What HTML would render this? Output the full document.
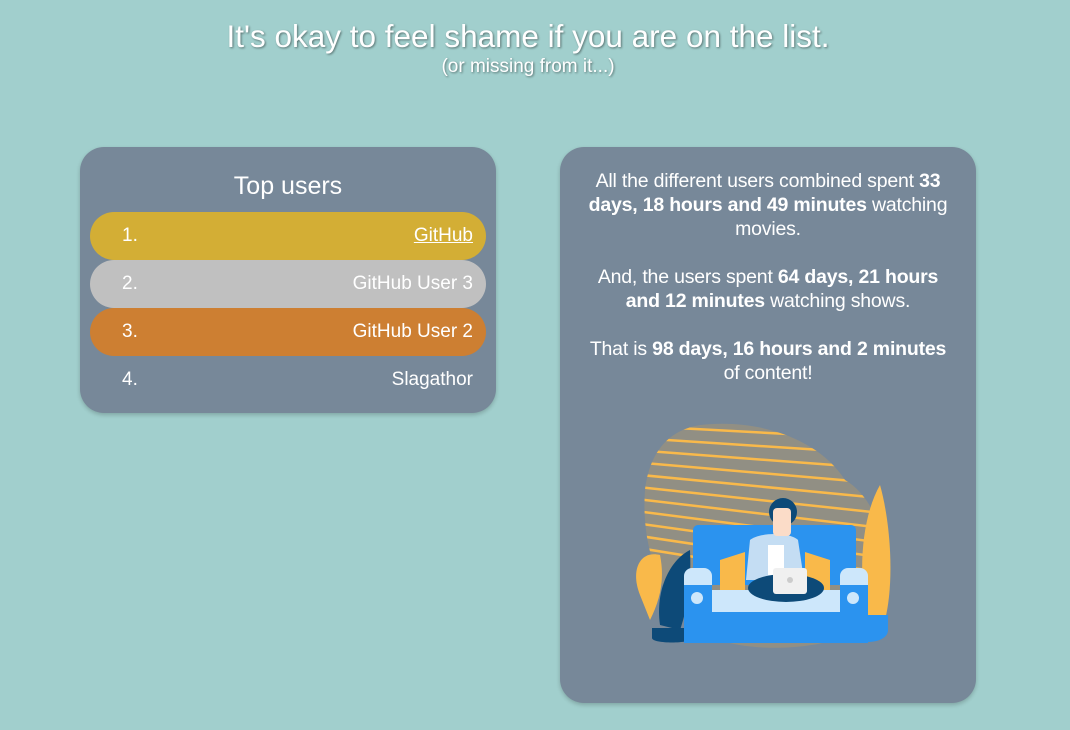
<!DOCTYPE html>
<html><head><meta charset="utf-8"><style>
body{margin:0;width:1070px;height:730px;background:#a1cfcd;font-family:"Liberation Sans",Roboto,sans-serif;color:#fff;overflow:hidden;position:relative}
.t{position:absolute;left:0;width:1056px;text-align:center;text-shadow:1px 1px 2px rgba(0,0,0,.45)}
.card{position:absolute;background:#778899;border-radius:24px;box-shadow:0 2px 4px rgba(0,0,0,.2)}
.row{position:absolute;left:10px;width:396px;height:48px;border-radius:24px;font-size:19px;line-height:48px}
.row .n{position:absolute;left:32px}.row .u{position:absolute;right:13px}
.txt{position:absolute;left:27px;width:362px;text-align:center;font-size:19.5px;line-height:24px;letter-spacing:-0.2px}
</style></head><body>
<div class="t" style="top:17px;font-size:31.5px;line-height:38px">It's okay to feel shame if you are on the list.</div>
<div class="t" style="top:56px;font-size:19px;line-height:22px">(or missing from it...)</div>
<div class="card" style="left:80px;top:147px;width:416px;height:266px">
<div style="position:absolute;top:25px;width:100%;text-align:center;font-size:25px">Top users</div>
<div class="row" style="top:65px;background:#d3ae35"><span class="n">1.</span><span class="u" style="text-decoration:underline">GitHub</span></div>
<div class="row" style="top:113px;background:#c0c0c0"><span class="n">2.</span><span class="u">GitHub User 3</span></div>
<div class="row" style="top:161px;background:#cd7f32"><span class="n">3.</span><span class="u">GitHub User 2</span></div>
<div class="row" style="top:209px"><span class="n">4.</span><span class="u">Slagathor</span></div>
</div>
<div class="card" style="left:560px;top:147px;width:416px;height:556px">
<div class="txt" style="top:22px">All the different users combined spent <b>33 days, 18 hours and 49 minutes</b> watching movies.<br><br>And, the users spent <b>64 days, 21 hours and 12 minutes</b> watching shows.<br><br>That is <b>98 days, 16 hours and 2 minutes</b><br>of content!</div>
<svg style="position:absolute;left:60px;top:263px" width="290" height="250" viewBox="620 410 290 250">
<defs><clipPath id="b"><path d="M700 425 C760 418 820 440 845 480 C880 500 895 560 880 610 C860 650 760 655 720 640 C670 620 640 560 645 490 C650 450 670 430 700 425Z"/></clipPath></defs>
<path d="M700 425 C760 418 820 440 845 480 C880 500 895 560 880 610 C860 650 760 655 720 640 C670 620 640 560 645 490 C650 450 670 430 700 425Z" fill="#918f84"/>
<g clip-path="url(#b)" stroke="#f9b94a" stroke-width="2.5">
<line x1="620" y1="425" x2="900" y2="440"/><line x1="620" y1="437" x2="900" y2="455"/><line x1="620" y1="449" x2="900" y2="470"/><line x1="620" y1="461" x2="900" y2="485"/><line x1="620" y1="473" x2="900" y2="500"/><line x1="620" y1="485" x2="900" y2="515"/><line x1="620" y1="497" x2="900" y2="530"/><line x1="620" y1="509" x2="900" y2="545"/><line x1="620" y1="521" x2="900" y2="560"/><line x1="620" y1="533" x2="900" y2="575"/><line x1="620" y1="545" x2="900" y2="590"/></g>
<path d="M868 620 C858 580 860 520 880 485 C890 520 895 580 885 620Z" fill="#f9b94a"/>
<path d="M640 595 C630 570 640 550 660 555 C665 580 660 600 650 620Z" fill="#f9b94a"/>
<path d="M660 625 C655 590 670 560 690 550 C692 590 685 615 680 630Z" fill="#0d4a78"/>
<path d="M652 628 h40 v10 c0 6 -40 6 -40 0z" fill="#0d4a78"/>
<rect x="693" y="525" width="163" height="60" rx="5" fill="#2b93ef"/>
<path d="M720 560 l25 -8 l0 40 l-25 0z M805 552 l25 8 l0 30 l-25 0z" fill="#f9b94a"/>
<rect x="700" y="590" width="160" height="22" fill="#cde7fb"/>
<rect x="684" y="568" width="28" height="75" rx="8" fill="#cde7fb"/>
<rect x="840" y="568" width="28" height="75" rx="8" fill="#cde7fb"/>
<rect x="684" y="585" width="28" height="58" fill="#2b93ef"/>
<rect x="840" y="585" width="28" height="58" fill="#2b93ef"/>
<rect x="710" y="612" width="130" height="31" fill="#2b93ef"/>
<path d="M868 615 h20 v15 c0 8 -10 12 -20 12z" fill="#2b93ef"/>
<circle cx="697" cy="598" r="6" fill="#cde7fb"/><circle cx="853" cy="598" r="6" fill="#cde7fb"/>
<path d="M750 540 c10 -8 40 -8 48 0 l6 40 h-58z" fill="#c4ddf3"/>
<rect x="768" y="545" width="16" height="30" fill="#fff"/>
<ellipse cx="783" cy="512" rx="14" ry="14" fill="#0d4a78"/>
<rect x="773" y="508" width="18" height="28" rx="4" fill="#fbdcc8"/>
<ellipse cx="786" cy="588" rx="38" ry="14" fill="#0d4a78"/>
<rect x="773" y="568" width="34" height="26" rx="3" fill="#f0f0f0"/>
<circle cx="790" cy="580" r="3" fill="#ccc"/>
</svg>
</div>
</body></html>
